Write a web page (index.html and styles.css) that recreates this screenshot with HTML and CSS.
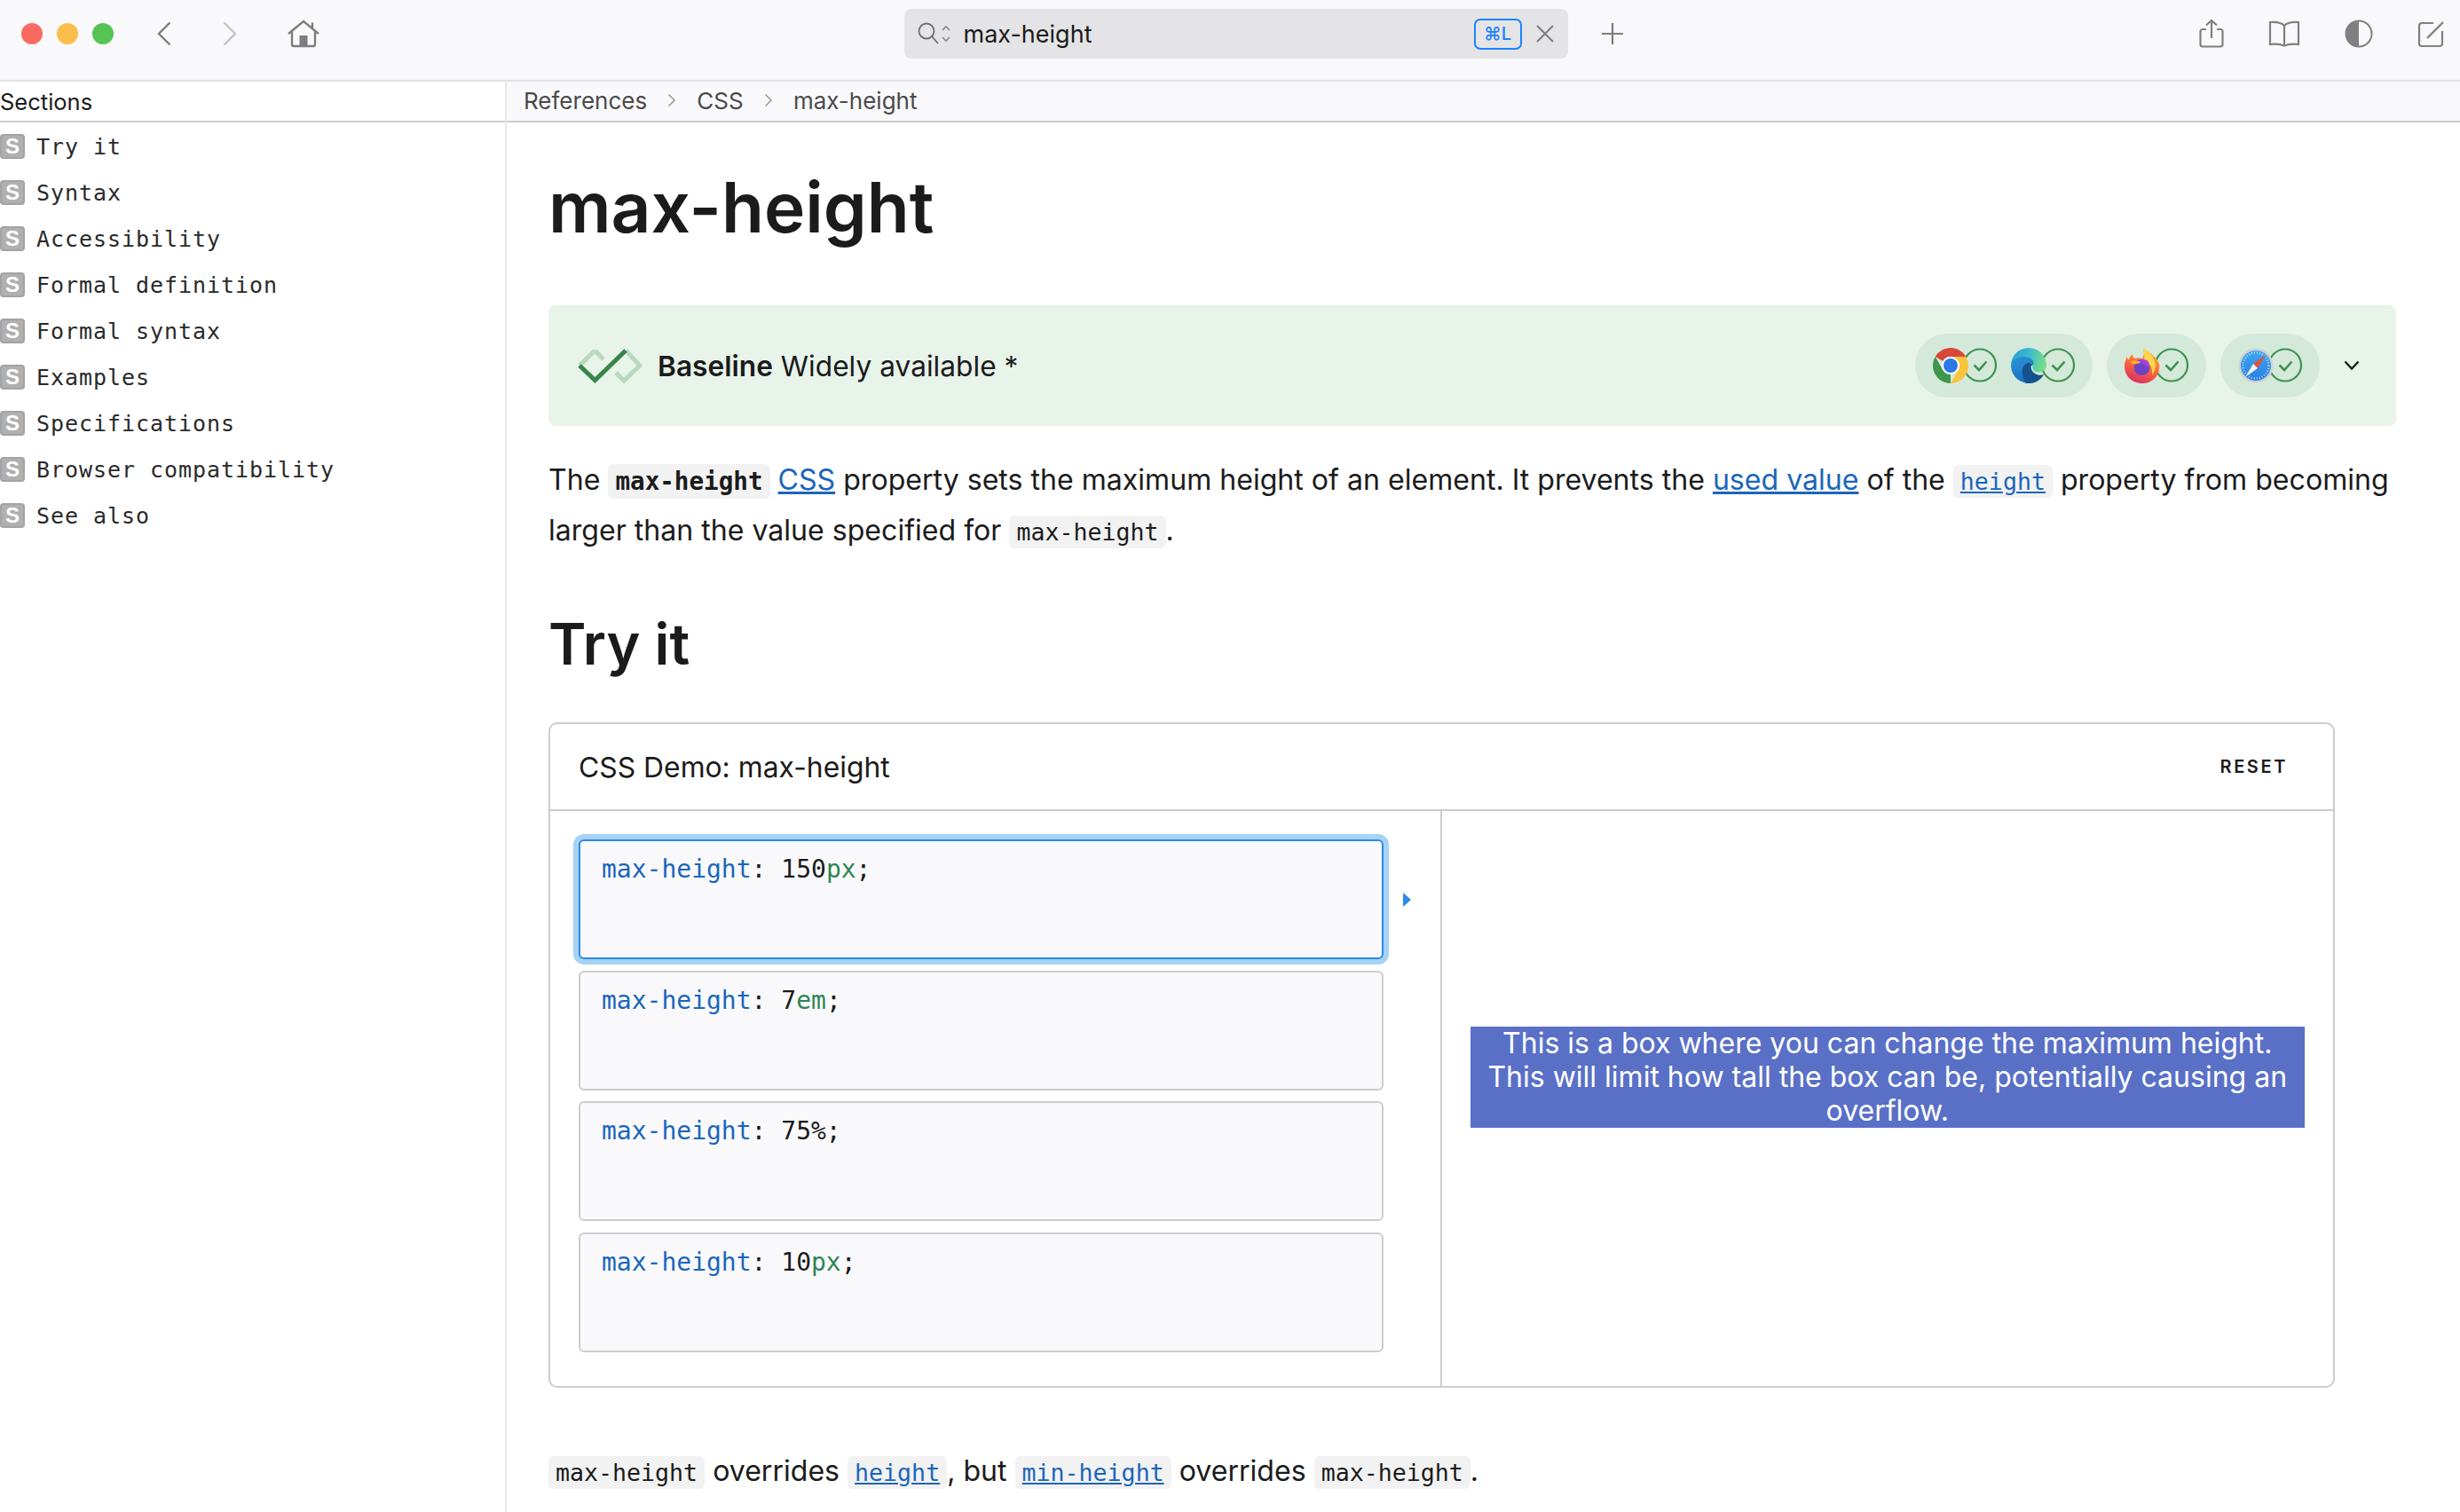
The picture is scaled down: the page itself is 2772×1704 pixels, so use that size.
FILE: index.html
```html
<!DOCTYPE html>
<html lang="en">
<head>
    <meta charset="UTF-8">
    <title>max-height</title>
    <link rel="stylesheet" href="styles.css">
</head>
<body>
    <!-- window toolbar -->
    <header class="toolbar">
        <div class="lights">
            <span class="light light-red"></span>
            <span class="light light-yellow"></span>
            <span class="light light-green"></span>
        </div>
        <svg class="tool-back" width="16" height="28" viewBox="0 0 16 28"><path d="M14.5 1.5 2 14l12.5 12.5" fill="none" stroke="#7d7d7f" stroke-width="2.4"/></svg>
        <svg class="tool-forward" width="16" height="28" viewBox="0 0 16 28"><path d="M1.5 1.5 14 14 1.5 26.5" fill="none" stroke="#c4c4c6" stroke-width="2.4"/></svg>
        <svg class="tool-home" width="36" height="32" viewBox="0 0 36 32"><path d="M1 16 18 2l17 14M28 9V3.5M5 13.5V28a2 2 0 0 0 2 2h22a2 2 0 0 0 2-2V13.5" fill="none" stroke="#7d7d7f" stroke-width="2.4"/><rect x="13.5" y="18" width="9" height="12" fill="#7d7d7f"/></svg>

        <div class="search">
            <svg class="search-icon" width="40" height="26" viewBox="0 0 40 26"><circle cx="10" cy="10" r="8.5" fill="none" stroke="#6f6f71" stroke-width="1.8"/><path d="m16 16 7 8" stroke="#6f6f71" stroke-width="1.8"/><path d="m28 9 4-4 4 4M28 17l4 4 4-4" fill="none" stroke="#8a8a8c" stroke-width="1.6"/></svg>
            <span class="search-text">max-height</span>
            <span class="search-key">⌘L</span>
            <svg class="search-close" width="22" height="22" viewBox="0 0 22 22"><path d="m2 2 18 18M20 2 2 20" stroke="#7d7d7f" stroke-width="2"/></svg>
        </div>
        <svg class="tool-plus" width="26" height="26" viewBox="0 0 26 26"><path d="M13 1v24M1 13h24" stroke="#7d7d7f" stroke-width="2.2"/></svg>

        <div class="tool-right">
            <svg width="28" height="34" viewBox="0 0 28 34"><path d="M8 12H4a2.5 2.5 0 0 0-2.5 2.5V29A2.5 2.5 0 0 0 4 31.5h20a2.5 2.5 0 0 0 2.5-2.5V14.5A2.5 2.5 0 0 0 24 12h-4M14 22V2M8 7.5 14 2l6 5.5" fill="none" stroke="#808082" stroke-width="2.2"/></svg>
            <svg width="36" height="30" viewBox="0 0 36 30"><path d="M18 6C15 2.5 9 1.5 2 2v25c6-.8 12-.3 16 1.5 4-1.8 10-2.300 16-1.500V2c-7-.5-13 .5-16 4Zm0 0v22" fill="none" stroke="#808082" stroke-width="2.2"/></svg>
            <svg width="32" height="32" viewBox="0 0 32 32"><circle cx="16" cy="16" r="14.5" fill="none" stroke="#808082" stroke-width="2"/><path d="M16 1.5a14.5 14.5 0 0 0 0 29Z" fill="#808082"/></svg>
            <svg width="32" height="32" viewBox="0 0 32 32"><path d="M18 4H5a3 3 0 0 0-3 3v20a3 3 0 0 0 3 3h20a3 3 0 0 0 3-3V13" fill="none" stroke="#808082" stroke-width="2.2"/><path d="M11 21 29 3" stroke="#808082" stroke-width="2.4"/></svg>
        </div>
    </header>

    <div class="layout">
        <aside class="sidebar">
            <div class="sidebar-title">Sections</div>
            <ul class="section-list">
                <li class="section-item"><span class="section-badge">S</span>Try it</li>
                <li class="section-item"><span class="section-badge">S</span>Syntax</li>
                <li class="section-item"><span class="section-badge">S</span>Accessibility</li>
                <li class="section-item"><span class="section-badge">S</span>Formal definition</li>
                <li class="section-item"><span class="section-badge">S</span>Formal syntax</li>
                <li class="section-item"><span class="section-badge">S</span>Examples</li>
                <li class="section-item"><span class="section-badge">S</span>Specifications</li>
                <li class="section-item"><span class="section-badge">S</span>Browser compatibility</li>
                <li class="section-item"><span class="section-badge">S</span>See also</li>
            </ul>
        </aside>

        <main class="content">
            <nav class="crumbs">
                <span>References</span>
                <svg class="crumb-sep" width="10" height="16" viewBox="0 0 10 16"><path d="m1.5 1.5 6.5 6.5-6.5 6.5" fill="none" stroke="#9a9a9c" stroke-width="1.6"/></svg>
                <span>CSS</span>
                <svg class="crumb-sep" width="10" height="16" viewBox="0 0 10 16"><path d="m1.5 1.5 6.5 6.5-6.5 6.5" fill="none" stroke="#9a9a9c" stroke-width="1.6"/></svg>
                <span>max-height</span>
            </nav>

            <article class="article">
                <h1 class="page-title">max-height</h1>

                <section class="baseline">
                    <svg class="baseline-mark" width="74" height="40" viewBox="0 0 74 40">
                        <path d="M20.5 3 30 13M55 3l16 17-18 17-9-9M3 20 20.5 3" fill="none" stroke="#b9d8c0" stroke-width="5"/>
                        <path d="m3 20 17.5 16.5L55 3" fill="none" stroke="#398447" stroke-width="5"/>
                    </svg>
                    <div class="baseline-text"><strong>Baseline</strong> Widely available *</div>

                    <div class="browser-pill">
                        <div class="browser">
                            <svg class="browser-logo" width="40" height="40" viewBox="0 0 40 40">
                                <path d="M2.7 10A20 20 0 0 1 37.3 10H20a10 10 0 0 0-8.7 5Z" fill="#d8483a"/>
                                <path d="M37.3 10A20 20 0 0 1 20 40l8.7-15a10 10 0 0 0 0-10L20 10Z" fill="#f9c33c"/>
                                <path d="M20 40A20 20 0 0 1 2.7 10l8.6 15a10 10 0 0 0 8.7 5Z" fill="#3f964c"/>
                                <circle cx="20" cy="20" r="10" fill="#fff"/>
                                <circle cx="20" cy="20" r="8" fill="#2a78e4"/>
                            </svg>
                            <svg class="browser-check" width="40" height="40" viewBox="0 0 40 40"><circle cx="21" cy="19.5" r="18" fill="none" stroke="#3b9350" stroke-width="2.2"/><path d="m14.5 19.5 5.5 5.5 8.5-9.5" fill="none" stroke="#3b9350" stroke-width="2.6"/></svg>
                        </div>
                        <div class="browser">
                            <svg class="browser-logo" width="40" height="40" viewBox="0 0 40 40">
                                <defs>
                                    <linearGradient id="edgeTop" x1="0" y1="0.3" x2="1" y2="0.5"><stop offset="0" stop-color="#2b9fd4"/><stop offset="0.5" stop-color="#3dbccb"/><stop offset="1" stop-color="#78de84"/></linearGradient>
                                    <linearGradient id="edgeLow" x1="0.2" y1="0" x2="0.5" y2="1"><stop offset="0" stop-color="#2a93d8"/><stop offset="1" stop-color="#1a6fbf"/></linearGradient>
                                </defs>
                                <path d="M0 20a20 20 0 0 1 40 0c0 5-5 8-10 7.5-4-.5-6-3-5.5-6C23 15 17 12 10 13 5 14 1 17 0 20Z" fill="url(#edgeTop)"/>
                                <path d="M0 20C2 11 12 8 20 11c5 2 7 6 5 8-5-4-11-2-12 4-1 8 5 14 13 16A20 20 0 0 1 0 20Z" fill="url(#edgeLow)"/>
                                <path d="M13 23c1-6 7-8 12-4-2 0-3 2-2 5 2 6 9 8 14 6-3 6-9 10-17 10-1 0-2 0-3-.5-3-3-5-10-4-16.5Z" fill="#14528f"/>
                            </svg>
                            <svg class="browser-check" width="40" height="40" viewBox="0 0 40 40"><circle cx="21" cy="19.5" r="18" fill="none" stroke="#3b9350" stroke-width="2.2"/><path d="m14.5 19.5 5.5 5.5 8.5-9.5" fill="none" stroke="#3b9350" stroke-width="2.6"/></svg>
                        </div>
                    </div>
                    <div class="browser-pill">
                        <div class="browser">
                            <svg class="browser-logo" width="40" height="40" viewBox="0 0 40 40">
                                <defs>
                                    <linearGradient id="foxBody" x1="0.7" y1="0" x2="0.3" y2="1"><stop offset="0" stop-color="#ffb52e"/><stop offset="0.5" stop-color="#fb6a36"/><stop offset="1" stop-color="#dd2c6a"/></linearGradient>
                                </defs>
                                <path d="M21 1c7 3 15 10 18 17 2 11-6 22-19 22C8 40 0 31 0 21c0-4 1-8 3-11l1 4c1-2 3-5 5-7 0 3 1 4 3 5 3-1 5-1 8 0 2-3 2-7 1-11Z" fill="url(#foxBody)"/>
                                <path d="M21 1c7 3 13 10 14 18 0 5-2 9-4 12 1-8-2-14-9-18 1-4 0-8-1-12Z" fill="#ffd64a"/>
                                <ellipse cx="19.5" cy="23" rx="9" ry="8" fill="#6d45c4"/>
                                <path d="M13 15c4-3 11-3 14 1 1 2 1 4 0 6-3-3-9-5-14-7Z" fill="#a53ce0"/>
                                <path d="M6 16c3-2 8-2 12 0-2 3-9 3-12 0Z" fill="#ffae36"/>
                            </svg>
                            <svg class="browser-check" width="40" height="40" viewBox="0 0 40 40"><circle cx="21" cy="19.5" r="18" fill="none" stroke="#3b9350" stroke-width="2.2"/><path d="m14.5 19.5 5.5 5.5 8.5-9.5" fill="none" stroke="#3b9350" stroke-width="2.6"/></svg>
                        </div>
                    </div>
                    <div class="browser-pill">
                        <div class="browser">
                            <svg class="browser-logo" width="40" height="40" viewBox="0 0 40 40">
                                <defs>
                                    <linearGradient id="safariFace" x1="0" y1="0" x2="0" y2="1"><stop offset="0" stop-color="#3ea8ee"/><stop offset="1" stop-color="#2a7fe0"/></linearGradient>
                                </defs>
                                <circle cx="20" cy="20" r="19.5" fill="#cfd2d6"/>
                                <circle cx="20" cy="20" r="17" fill="url(#safariFace)"/>
                                <circle cx="20" cy="20" r="14.5" fill="none" stroke="#cfe6fa" stroke-width="2.5" stroke-dasharray="0.8 2.2"/>
                                <path d="m31 8-14 10 5 5Z" fill="#e5503c"/>
                                <path d="m8 33 14-10-5-5Z" fill="#f2f2f2"/>
                            </svg>
                            <svg class="browser-check" width="40" height="40" viewBox="0 0 40 40"><circle cx="21" cy="19.5" r="18" fill="none" stroke="#3b9350" stroke-width="2.2"/><path d="m14.5 19.5 5.5 5.5 8.5-9.5" fill="none" stroke="#3b9350" stroke-width="2.6"/></svg>
                        </div>
                    </div>
                    <svg class="baseline-caret" width="18" height="12" viewBox="0 0 18 12"><path d="m1.5 1.5 7.5 8 7.5-8" fill="none" stroke="#1b1b1b" stroke-width="2.4"/></svg>
                </section>

                <p class="text intro">The <code class="code code-strong">max-height</code> <a class="link" href="#">CSS</a> property sets the maximum height of an element. It prevents the <a class="link" href="#">used value</a> of the <a class="code link" href="#">height</a> property from becoming larger than the value specified for <code class="code">max-height</code>.</p>

                <h2 class="section-title">Try it</h2>

                <section class="demo">
                    <div class="demo-head">
                        <span class="demo-title">CSS Demo: max-height</span>
                        <span class="demo-reset">RESET</span>
                    </div>
                    <div class="demo-body">
                        <div class="choices">
                            <div class="choice choice-active"><span class="prop">max-height</span>: 150<span class="unit">px</span>;</div>
                            <div class="choice"><span class="prop">max-height</span>: 7<span class="unit">em</span>;</div>
                            <div class="choice"><span class="prop">max-height</span>: 75%;</div>
                            <div class="choice"><span class="prop">max-height</span>: 10<span class="unit">px</span>;</div>
                        </div>
                        <div class="output">
                            <div class="output-box">This is a box where you can change the maximum height. This will limit how tall the box can be, potentially causing an overflow.</div>
                        </div>
                    </div>
                </section>

                <p class="text closing"><code class="code">max-height</code> overrides <a class="code link" href="#">height</a>, but <a class="code link" href="#">min-height</a> overrides <code class="code">max-height</code>.</p>
            </article>
        </main>
    </div>
</body>
</html>
```

FILE: styles.css
```css
* {
    margin: 0;
    padding: 0;
    box-sizing: border-box;
}

html, body {
    height: 100%;
    overflow: hidden;
}

body {
    font-family: Inter, "Noto Sans", sans-serif;
    color: #1b1b1b;
    background-color: white;
}

/* toolbar */
.toolbar {
    height: 92px;
    display: flex;
    align-items: center;
    background-color: #f9f9fb;
    border-bottom: 2px solid #e3e3e5;
    padding-bottom: 14px;
}

.lights {
    display: flex;
    gap: 16px;
    margin-left: 24px;
}

.light {
    width: 24px;
    height: 24px;
    border-radius: 50%;
}

.light-red { background-color: #f96b60; }
.light-yellow { background-color: #fbbd4c; }
.light-green { background-color: #55c455; }

.tool-back { margin-left: 49px; }
.tool-forward { margin-left: 58px; }
.tool-home { margin-left: 56.5px; }

.search {
    width: 748px;
    height: 56px;
    margin-left: 659px;
    display: flex;
    align-items: center;
    background-color: #e4e4e6;
    border-radius: 8px;
    padding-left: 15px;
}

.search-text {
    font-size: 27px;
    margin-left: 12px;
}

.search-key {
    width: 54px;
    height: 35px;
    margin-left: auto;
    border: 2px solid #1a82ff;
    border-radius: 7px;
    color: #1a82ff;
    font-size: 20px;
    font-weight: 500;
    display: flex;
    align-items: center;
    justify-content: center;
}

.search-close {
    margin-left: 15px;
    margin-right: 15px;
}

.tool-plus { margin-left: 37px; }

.tool-right {
    margin-left: auto;
    margin-right: 16px;
    display: flex;
    align-items: center;
    gap: 50px;
}

/* page layout */
.layout {
    height: calc(100% - 92px);
    display: grid;
    grid-template-columns: 571px 1fr;
}

.sidebar {
    border-right: 2px solid #e8e8e8;
}

.sidebar-title {
    height: 46px;
    font-size: 25.5px;
    line-height: 46px;
    border-bottom: 2px solid #cdcdcd;
}

.section-list {
    list-style: none;
    padding-top: 1.5px;
}

.section-item {
    height: 52px;
    display: flex;
    align-items: center;
    font-family: "DejaVu Sans Mono", monospace;
    font-size: 25px;
    letter-spacing: 0.95px;
    color: #2a2a2a;
}

.section-badge {
    width: 28px;
    height: 28px;
    margin-right: 13px;
    margin-top: -2px;
    background-color: #b0b0b0;
    border: 2px solid #a3a3a3;
    border-radius: 4px;
    color: white;
    font-family: "Liberation Sans", sans-serif;
    font-size: 24px;
    font-weight: bold;
    letter-spacing: 0;
    display: flex;
    align-items: center;
    justify-content: center;
}

.crumbs {
    height: 46px;
    display: flex;
    align-items: center;
    padding-left: 19px;
    padding-bottom: 2px;
    background-color: #f9f9fb;
    border-bottom: 2px solid #cdcdcd;
    font-size: 26px;
    color: #4a4a4c;
}

.crumb-sep {
    margin: 0 23.1px;
}

.article {
    padding: 50px 72px 0 47px;
}

.page-title {
    font-size: 78.4px;
    line-height: 91px;
    font-weight: 600;
}

/* baseline banner */
.baseline {
    height: 136px;
    margin-top: 65px;
    padding-left: 32px;
    padding-right: 41.5px;
    display: flex;
    align-items: center;
    background-color: #e8f3ea;
    border-radius: 8px;
}

.baseline-text {
    font-size: 31.7px;
    margin-left: 17px;
    margin-right: auto;
}

.baseline-text strong {
    font-weight: 600;
}

.browser-pill {
    height: 72px;
    padding: 0 20px;
    margin-right: 16px;
    display: flex;
    align-items: center;
    gap: 16px;
    background-color: #d5e9da;
    border-radius: 36px;
}

.browser {
    display: flex;
    align-items: center;
}

.browser-logo {
    position: relative;
    z-index: 1;
}

.browser-check {
    margin-left: -8px;
}

.baseline-caret {
    margin-left: 11px;
}

/* text */
.text {
    font-size: 32.1px;
    line-height: 54.5px;
}

.intro {
    margin-top: 34px;
}

.code {
    font-family: "DejaVu Sans Mono", monospace;
    font-size: 26.6px;
    background-color: #f2f2f2;
    border-radius: 6px;
    padding: 3px 8px;
}

.code-strong {
    font-size: 27.6px;
    font-weight: bold;
}

.link {
    color: #1a66bb;
    text-decoration: underline;
}

.section-title {
    font-size: 64.4px;
    line-height: 82px;
    font-weight: 600;
    margin-top: 58px;
}

/* interactive demo */
.demo {
    margin-top: 47px;
    width: 2013px;
    height: 750px;
    border: 2px solid #cdcdcd;
    border-radius: 10px;
}

.demo-head {
    height: 98px;
    padding: 0 32px;
    display: flex;
    align-items: center;
    justify-content: space-between;
    border-bottom: 2px solid #cdcdcd;
}

.demo-title {
    font-size: 31.85px;
}

.demo-reset {
    font-size: 20px;
    font-weight: 600;
    letter-spacing: 2.6px;
    margin-right: 19px;
}

.demo-body {
    height: 650px;
    display: grid;
    grid-template-columns: 1005px 1fr;
}

.choices {
    padding: 32px 64px 0 32px;
    border-right: 2px solid #cdcdcd;
    display: flex;
    flex-direction: column;
    gap: 12.5px;
}

.choice {
    height: 135px;
    padding: 12px 24px;
    background-color: #f9f9fb;
    border: 2px solid #cdcdcd;
    border-radius: 6px;
    font-family: "DejaVu Sans Mono", monospace;
    font-size: 28px;
    line-height: 40px;
    position: relative;
}

.choice-active {
    border-color: #2a8ae8;
    box-shadow: 0 0 0 6px #a6d2f6;
}

.choice-active::after {
    content: "";
    position: absolute;
    left: 926.5px;
    top: 58px;
    border-left: 9px solid #2a8ae8;
    border-top: 8px solid transparent;
    border-bottom: 8px solid transparent;
}

.prop { color: #1a66bb; }
.unit { color: #2d8653; }

.output {
    padding: 0 32px 51px 31.5px;
    display: flex;
    align-items: center;
}

.output-box {
    width: 100%;
    padding: 0 12px;
    background-color: #5a70c7;
    color: white;
    font-family: Inter, sans-serif;
    font-size: 32px;
    line-height: 38px;
    text-align: center;
}

.closing {
    margin-top: 67px;
}
```
